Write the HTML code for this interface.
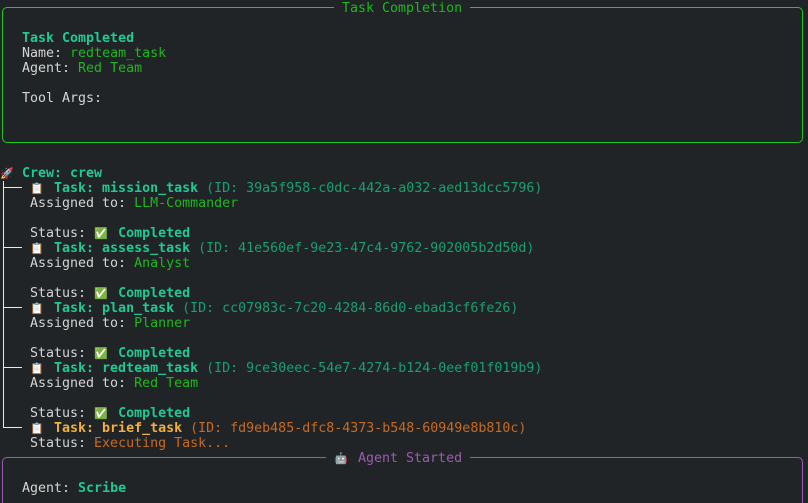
<!DOCTYPE html>
<html style="overflow:hidden;height:503px"><head><meta charset="utf-8"><style>
body{margin:0;background:#212426;width:808px;height:503px;overflow:hidden;position:relative;font-family:"DejaVu Sans Mono","Liberation Mono",monospace;font-size:13.3px;color:#d4d4d4}
.l{position:absolute;white-space:pre;line-height:15px;height:15px}
.b{font-weight:bold}
.t{color:#1fc996}.g{color:#1db81f}.d{color:#18a070}.o{color:#f2b13c}.od{color:#c86a22}.p{color:#9a5cb0}
.box{position:absolute;border-radius:5px}
.tl{position:absolute;background:#e8e8e8}
.e{display:inline-block;width:16px;font-size:11px}
</style></head><body>
<div class="box" style="left:2px;top:7px;width:799px;height:134px;border:1px solid #1ec81e"></div>
<div class="l g" style="left:334px;top:1px;background:#212426;padding:0 8px">Task Completion</div>
<div class="l b t" style="left:22px;top:31px">Task Completed</div>
<div class="l" style="left:22px;top:46px">Name: <span class="g">redteam_task</span></div>
<div class="l" style="left:22px;top:61px">Agent: <span class="g">Red Team</span></div>
<div class="l" style="left:22px;top:91px">Tool Args:</div>

<div class="l" style="left:0;top:166px"><span class="e" style="width:22px">🚀</span><span class="b t">Crew: crew</span></div>
<div class="tl" style="left:3px;top:181px;width:1px;height:247px"></div>
<div class="tl" style="left:3px;top:187px;width:19px;height:1px"></div>
<div class="tl" style="left:3px;top:367px;width:19px;height:1px"></div>
<div class="tl" style="left:3px;top:247px;width:19px;height:1px"></div>
<div class="tl" style="left:3px;top:307px;width:19px;height:1px"></div>
<div class="tl" style="left:3px;top:427px;width:19px;height:1px"></div>

<div class="l" style="left:30px;top:181px"><span class="e">📋</span> <span class="b t">Task: mission_task</span> <span class="d">(ID: 39a5f958-c0dc-442a-a032-aed13dcc5796)</span></div>
<div class="l" style="left:30px;top:196px">Assigned to: <span class="g">LLM-Commander</span></div>
<div class="l" style="left:30px;top:226px">Status: <span class="e">✅</span> <span class="b t">Completed</span></div>
<div class="l" style="left:30px;top:241px"><span class="e">📋</span> <span class="b t">Task: assess_task</span> <span class="d">(ID: 41e560ef-9e23-47c4-9762-902005b2d50d)</span></div>
<div class="l" style="left:30px;top:256px">Assigned to: <span class="g">Analyst</span></div>
<div class="l" style="left:30px;top:286px">Status: <span class="e">✅</span> <span class="b t">Completed</span></div>
<div class="l" style="left:30px;top:301px"><span class="e">📋</span> <span class="b t">Task: plan_task</span> <span class="d">(ID: cc07983c-7c20-4284-86d0-ebad3cf6fe26)</span></div>
<div class="l" style="left:30px;top:316px">Assigned to: <span class="g">Planner</span></div>
<div class="l" style="left:30px;top:346px">Status: <span class="e">✅</span> <span class="b t">Completed</span></div>
<div class="l" style="left:30px;top:361px"><span class="e">📋</span> <span class="b t">Task: redteam_task</span> <span class="d">(ID: 9ce30eec-54e7-4274-b124-0eef01f019b9)</span></div>
<div class="l" style="left:30px;top:376px">Assigned to: <span class="g">Red Team</span></div>
<div class="l" style="left:30px;top:406px">Status: <span class="e">✅</span> <span class="b t">Completed</span></div>
<div class="l" style="left:30px;top:421px"><span class="e">📋</span> <span class="b o">Task: brief_task</span> <span class="od">(ID: fd9eb485-dfc8-4373-b548-60949e8b810c)</span></div>
<div class="l" style="left:30px;top:436px">Status: <span class="od">Executing Task...</span></div>

<div class="box" style="left:2px;top:457px;width:799px;height:60px;border:1px solid #9a5cb0"></div>
<div class="l p" style="left:326px;top:451px;background:#212426;padding:0 8px"><span class="e">🤖</span> Agent Started</div>
<div class="l" style="left:22px;top:481px">Agent: <span class="b t">Scribe</span></div>
</body></html>
